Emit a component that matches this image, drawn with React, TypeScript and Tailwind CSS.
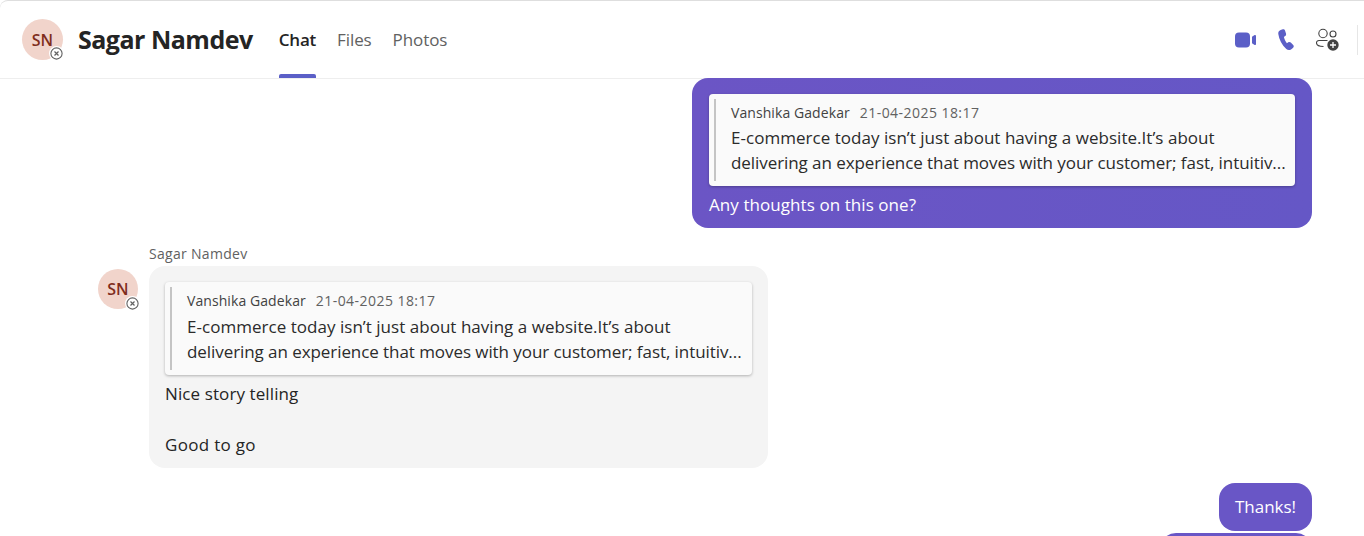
import React from "react";

const font = { fontFamily: '"Open Sans", "Noto Sans", sans-serif' };

function Quote({ tall }: { tall?: boolean }) {
  return (
    <div className="rounded-[4px] bg-[#fafafa] p-[5px] shadow-[0_1px_3px_rgba(0,0,0,0.28)]">
      <div className={tall ? "h-[83px] border-l-2 border-[#c4c4c4] pl-[15px] text-[#2b2b2b]" : "h-[82px] border-l-2 border-[#c4c4c4] pl-[15px] text-[#2b2b2b]"}>
        <div className={tall ? "flex h-[27px] items-center gap-[10px] text-[14px]" : "flex h-[26px] items-center gap-[10px] text-[14px]"}>
          <span className="tracking-[0.08px] text-[#424242]">Vanshika Gadekar</span>
          <span className="tracking-[0.45px] text-[#616161]">21-04-2025 18:17</span>
        </div>
        <div className="text-[17px] leading-[25px] whitespace-nowrap">
          <div className="tracking-[0.03px]">E-commerce today isn’t just about having a website.It’s about</div>
          <div className="tracking-[-0.07px]">delivering an experience that moves with your customer; fast, intuitiv...</div>
        </div>
      </div>
    </div>
  );
}

function Avatar({ big }: { big?: boolean }) {
  return (
    <div className={big ? "relative h-[41px] w-[41px] shrink-0 rounded-full bg-[#f1d4cb]" : "relative h-[40px] w-[40px] shrink-0 rounded-full bg-[#f1d4cb]"}>
      <div className="flex h-full w-full items-center justify-center text-[16px] font-semibold tracking-[0.2px] text-[#7f2d1c]">SN</div>
      <div className={big ? "absolute right-[-1px] bottom-[-1px] flex h-[15px] w-[15px] items-center justify-center rounded-full bg-white" : "absolute right-[-2px] bottom-[-2px] flex h-[15px] w-[15px] items-center justify-center rounded-full bg-white"}>
        <svg width="13" height="13" viewBox="0 0 13 13" fill="none" stroke="#616161" strokeWidth="1.1">
          <circle cx="6.5" cy="6.5" r="5.6" />
          <path d="M4.5 4.5l4 4M8.5 4.5l-4 4" strokeWidth="1.2" />
        </svg>
      </div>
    </div>
  );
}

export default function App() {
  return (
    <div className="h-[536px] w-[1364px] overflow-hidden bg-white" style={font}>
      <header className="flex h-[79px] items-center rounded-tl-[8px] border-t border-b border-t-[#dedede] border-b-[#eeeeee] pl-[22px]">
        <Avatar big />
        <div className="ml-[15px] pt-[1px] text-[25px] font-bold tracking-[-0.5px] text-[#242424]">Sagar Namdev</div>
        <nav className="ml-[26px] flex h-full gap-[21px] text-[17px] tracking-[-0.1px] text-[#616161]">
          <div className="relative flex items-center pt-[1px] font-semibold tracking-[-0.2px] text-[#242424]">
            Chat
            <div className="absolute right-0 bottom-0 left-0 h-[4px] rounded-t-[2px] bg-[#5b5fc7]" />
          </div>
          <div className="flex items-center pt-[1px]">Files</div>
          <div className="flex items-center pt-[1px]">Photos</div>
        </nav>
        <div className="ml-auto flex items-center">
          <svg width="22" height="22" viewBox="0 0 22 22" fill="#5b5fc7">
            <rect x="0" y="3.500" width="15" height="15" rx="4" />
            <path d="M17 7.800l2.600-1.700c.7-.5 1.400 0 1.400.8v8.200c0 .8-.7 1.300-1.400.8L17 14.200z" />
          </svg>
          <svg className="ml-[21px]" width="18" height="22" viewBox="0 0 18 22" fill="#5b5fc7">
            <path d="M4.800.3 2.600 1.100C.9 1.800 0 3.300.3 5.100c.7 5.400 3.600 10.800 8 15 1.400 1.200 3.300 1.300 4.700.3l1.900-1.400c1-.8 1.200-2.100.3-3l-2.400-2.400c-.7-.7-1.700-.8-2.500-.3l-1.400.9C7.500 12.200 6.300 10 5.900 7.900l1.200-.8c.9-.6 1.200-1.700.9-2.700L7 1.600C6.700.5 5.700 0 4.800.3z" />
          </svg>
          <svg className="ml-[20px]" width="23" height="23" viewBox="0 0 23 23" fill="none" stroke="#424242" strokeWidth="1.1">
            <circle cx="7" cy="5.500" r="4.200" />
            <circle cx="17" cy="6" r="3" />
            <path d="M11.500 12.500H3c-1.400 0-2.500 1-2.500 2.300 0 2.300 3 3.700 7 3.700" />
            <circle cx="17" cy="17" r="5.700" fill="#424242" stroke="none" />
            <path d="M17 14v6M14 17h6" stroke="#fff" strokeWidth="1.300" />
          </svg>
          <div className="ml-[18px] h-[30px] w-px bg-[#e6e6e6]" />
          <div className="w-[6px]" />
        </div>
      </header>

      <main className="flex flex-col pr-[52px] pl-[98px] text-[18px] leading-[25px]">
        <div className="-mt-px flex justify-end">
          <div className="h-[150px] w-[620px] rounded-[16px] bg-gradient-to-r from-[#6b55c5] to-[#6557c6] px-[17px] pt-[16px] text-white">
            <Quote />
            <div className="mt-[6px] text-[17px] tracking-[0.07px] text-white">Any thoughts on this one?</div>
          </div>
        </div>

        <div className="mt-[16px] flex gap-[11px]">
          <div className="pt-[25px]">
            <Avatar />
          </div>
          <div>
            <div className="h-[22px] text-[14px] leading-[20px] tracking-[0.3px] text-[#616161]">Sagar Namdev</div>
            <div className="h-[202px] w-[619px] rounded-[16px] bg-[#f4f4f4] px-[16px] pt-[16px] text-[17px] text-[#242424]">
              <Quote tall />
              <div className="mt-[6px] tracking-[0.1px]">Nice story telling</div>
              <div className="mt-[26px] tracking-[0.3px]">Good to go</div>
            </div>
          </div>
        </div>

        <div className="mt-[15px] flex justify-end">
          <div className="flex h-[48px] w-[93px] items-center justify-center rounded-[16px] bg-[#6956c6] pb-[1px] text-[17px] text-white">
            Thanks!
          </div>
        </div>
        <div className="mt-[2px] flex justify-end">
          <div className="h-[48px] w-[152px] rounded-[16px] bg-[#6956c6]" />
        </div>
      </main>
    </div>
  );
}
